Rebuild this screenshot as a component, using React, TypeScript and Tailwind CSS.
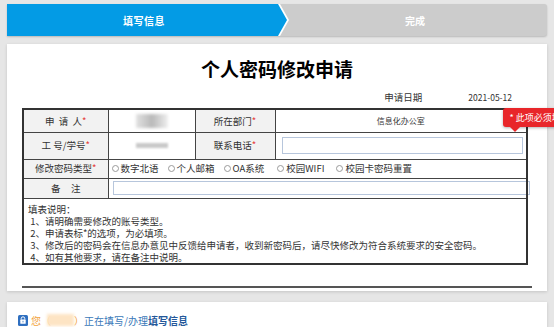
import React from "react";

const Star = () => <span className="text-[#e53935]">*</span>;

const Radio = ({ label }: { label: string }) => (
  <span className="flex items-center mr-[9px]">
    <span className="w-[7px] h-[7px] rounded-full border border-[#9a9a9a] bg-white mr-[2px]" />
    {label}
  </span>
);

const App = () => {
  return (
    <div className="w-[554px] h-[327px] overflow-hidden bg-[#e6e6e6] pt-[4px] font-['Noto_Sans_CJK_SC',sans-serif]">
      {/* Steps */}
      <div className="mx-[7px] h-[32px] flex bg-[#cccccc] rounded-r-[3px] shadow-[0_1px_2px_rgba(0,0,0,0.2)]">
        <div className="w-[282px] h-full bg-white [clip-path:polygon(0_0,273px_0,282px_50%,273px_100%,0_100%)]">
          <div className="w-[280px] h-full bg-[#039be5] pr-[6px] flex items-center justify-center text-white text-[10px] font-bold tracking-[0.5px] [clip-path:polygon(0_0,271px_0,280px_50%,271px_100%,0_100%)]">
            填写信息
          </div>
        </div>
        <div className="flex-1 flex items-center justify-center pr-[6px] text-white text-[10px] font-bold">完成</div>
      </div>

      {/* Form card */}
      <div className="mx-[7px] mt-[8px] h-[247px] bg-white px-[15px] pt-[12px] shadow-[0_1px_3px_rgba(0,0,0,0.15)]">
        <h1 className="text-center text-[19px] font-bold leading-[26px] text-black">个人密码修改申请</h1>
        <div className="mt-[6px] mb-[2px] h-[18px] flex items-center justify-end gap-[46px] pr-[20px] text-[9.5px] text-[#333]">
          <span>申请日期</span>
          <span className="text-[8.5px]">2021-05-12</span>
        </div>

        <table className="w-[504px] table-fixed border-collapse border-2 border-[#333] text-[9.5px] text-[#333]">
          <colgroup>
            <col className="w-[85px]" />
            <col className="w-[87px]" />
            <col className="w-[80px]" />
            <col className="w-[252px]" />
          </colgroup>
          <tbody>
            <tr className="h-[23px]">
              <td className="border border-[#444] bg-[#f2f2f2] text-center">
                申&nbsp;&nbsp;请&nbsp;&nbsp;人<Star />
              </td>
              <td className="border border-[#444]">
                <div className="mx-auto w-[32px] h-[14px] blur-[1.5px] bg-gradient-to-r from-[#e2e2e2] via-[#b9b9b9] to-[#efefef]" />
              </td>
              <td className="border border-[#444] bg-[#f2f2f2] text-center">
                所在部门<Star />
              </td>
              <td className="border border-[#444] text-center text-[8px]">信息化办公室</td>
            </tr>
            <tr className="h-[27px]">
              <td className="border border-[#444] bg-[#f2f2f2] text-center">
                工&nbsp;号/学号<Star />
              </td>
              <td className="border border-[#444]">
                <div className="mx-auto w-[32px] h-[5px] blur-[1px] bg-[#c9c9c9]" />
              </td>
              <td className="border border-[#444] bg-[#f2f2f2] text-center">
                联系电话<Star />
              </td>
              <td className="border border-[#444] pl-[6px] pr-[3px]">
                <div className="relative h-[17px] border border-[#b7c6dc] bg-white">
                  {/* tooltip */}
                  <div className="absolute left-[220px] top-[-30px] z-10">
                    <div className="h-[19px] rounded-[3px] bg-[#e8262a] px-[7px] flex items-center whitespace-nowrap text-white text-[9px] shadow-[0_1px_3px_rgba(0,0,0,0.3)]">
                      *&nbsp;此项必须填写
                    </div>
                    <div className="ml-[7px] w-0 h-0 border-l-[5px] border-r-[5px] border-t-[5px] border-l-transparent border-r-transparent border-t-[#e8262a]" />
                  </div>
                </div>
              </td>
            </tr>
            <tr className="h-[19px]">
              <td className="border border-[#444] bg-[#f2f2f2] text-center">
                修改密码类型<Star />
              </td>
              <td colSpan={3} className="border border-[#444] pl-[3px]">
                <div className="flex items-center whitespace-nowrap">
                  <Radio label="数字北语" />
                  <Radio label="个人邮箱" />
                  <Radio label="OA系统" />
                  <span className="mr-[4px]" />
                  <Radio label="校园WIFI" />
                  <span className="mr-[3px]" />
                  <Radio label="校园卡密码重置" />
                </div>
              </td>
            </tr>
            <tr className="h-[20px]">
              <td className="border border-[#444] bg-[#f2f2f2] text-center">备&nbsp;&nbsp;&nbsp;&nbsp;&nbsp;注</td>
              <td colSpan={3} className="border border-[#444] pl-[4px]">
                <div className="w-[417px] h-[14px] border border-[#b7c6dc] bg-white" />
              </td>
            </tr>
            <tr className="h-[66px]">
              <td colSpan={4} className="border border-[#444] align-top px-[4px] pt-[4px] leading-[12px]">
                <div>填表说明：</div>
                <div>&nbsp;1、请明确需要修改的账号类型。</div>
                <div>&nbsp;2、申请表标*的选项，为必填项。</div>
                <div>&nbsp;3、修改后的密码会在信息办意见中反馈给申请者，收到新密码后，请尽快修改为符合系统要求的安全密码。</div>
                <div>&nbsp;4、如有其他要求，请在备注中说明。</div>
              </td>
            </tr>
          </tbody>
        </table>

        <div className="mt-[21px] h-[2px] bg-[#555]" />
      </div>

      {/* Status card */}
      <div className="mx-[7px] mt-[11px] h-[40px] bg-white px-[11px] pt-[12px] shadow-[0_1px_3px_rgba(0,0,0,0.15)]">
        <div className="flex items-center h-[12px] text-[10px] whitespace-nowrap">
          <svg width="10" height="11" viewBox="0 0 10 11" className="mr-[3px]">
            <rect x="0" y="0" width="10" height="11" rx="1.5" fill="#2f6fc0" />
            <path d="M3.2 4.6V3.6a1.8 1.8 0 0 1 3.6 0v1" stroke="#fff" strokeWidth="1" fill="none" />
            <rect x="2.3" y="4.6" width="5.4" height="4.2" rx="0.6" fill="#fff" />
            <rect x="4.6" y="5.8" width="0.8" height="1.6" fill="#2f6fc0" />
          </svg>
          <span className="text-[#f2a33a]">您（</span>
          <span className="-ml-[4px] w-[27px] h-[12px] bg-[#fde4c4] blur-[1.5px]" />
          <span className="text-[#f2a33a]">）</span>
          <span className="text-[#3a78b8]">正在填写/办理</span>
          <span className="text-[#24589a] font-semibold">填写信息</span>
        </div>
      </div>
    </div>
  );
};

export default App;
